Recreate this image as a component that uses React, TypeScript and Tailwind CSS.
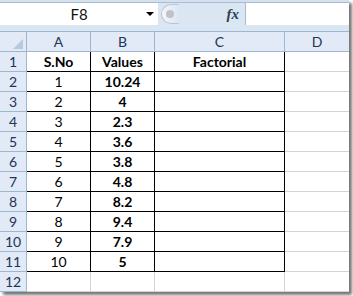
import React from 'react'

const cols = ['A', 'B', 'C', 'D']
const colWidths = ['w-[64px]', 'w-[64px]', 'w-[130px]', 'w-[64px]']

const data: [string, string, string][] = [
  ['S.No', 'Values', 'Factorial'],
  ['1', '10.24', ''],
  ['2', '4', ''],
  ['3', '2.3', ''],
  ['4', '3.6', ''],
  ['5', '3.8', ''],
  ['6', '4.8', ''],
  ['7', '8.2', ''],
  ['8', '9.4', ''],
  ['9', '7.9', ''],
  ['10', '5', ''],
]

function FormulaBar() {
  return (
    <div className="flex h-[22px]">
      <div className="relative flex w-[158px] items-center justify-center bg-white text-[15px] text-[#111]">
        F8
        <span className="absolute right-[4px] top-[9px] h-0 w-0 border-x-[4px] border-t-[4px] border-x-transparent border-t-black" />
      </div>
      <div className="flex w-[87px] items-center bg-[#dbe6f3]">
        <div className="ml-[3px] flex h-[20px] w-[18px] items-center rounded-l-full border border-r-0 border-[#b9c6d6] bg-gradient-to-r from-[#f4f6f9] to-[#dbe6f3] pl-[4px]">
          <span className="h-[8px] w-[8px] rounded-full bg-[#bfc3c9]" />
        </div>
        <span className="ml-auto mr-[6px] font-['Liberation_Serif',serif] text-[15px] font-bold italic text-[#2f3e56]">
          fx
        </span>
      </div>
      <div className="flex-1 border-l border-[#a9bcd5] bg-white" />
    </div>
  )
}

export default function App() {
  return (
    <div className="min-h-screen bg-white font-['Lato',sans-serif]">
      <div className="flex w-[349px] flex-col bg-[#dbe6f3] shadow-[3px_3px_3px_rgba(0,0,0,0.55)]">
        <div className="h-[3px] border-b border-[#a9bcd5] bg-[#d5e0ee]" />
        <FormulaBar />
        <div className="h-[6px] bg-[#dbe6f3]" />

        {/* column headers */}
        <div className="flex h-[21px] border-y border-[#9eb6ce] bg-[#e1eaf6] text-[14px] text-[#1e3555]">
          <div className="relative w-[27px] border-r border-[#9eb6ce]">
            <span className="absolute bottom-[2px] right-[3px] h-0 w-0 border-b-[10px] border-l-[10px] border-b-[#b8c9de] border-l-transparent" />
          </div>
          {cols.map((c, i) => (
            <div
              key={c}
              className={`${colWidths[i]} flex items-center justify-center ${i < 3 ? 'border-r border-[#9eb6ce]' : ''}`}
            >
              {c}
            </div>
          ))}
        </div>

        {/* rows */}
        {Array.from({ length: 12 }).map((_, r) => {
          const row = data[r]
          const boxed = r < 11
          return (
            <div key={r} className="flex h-[20px] text-[14px]">
              <div className="flex w-[27px] items-center justify-center border-b border-r border-[#9eb6ce] bg-[#e1eaf6] text-[#1e3555]">
                {r + 1}
              </div>
              <div
                className={`flex w-[64px] items-center justify-center border-b border-r bg-white text-black ${
                  boxed ? 'border-black' : 'border-r-[#d4d4d4] border-b-[#d4d4d4]'
                } ${r === 0 ? 'font-bold' : ''}`}
              >
                {row ? row[0] : ''}
              </div>
              <div
                className={`flex w-[64px] items-center justify-center border-b border-r bg-white font-bold text-black ${
                  boxed ? 'border-black' : 'border-r-[#d4d4d4] border-b-[#d4d4d4]'
                }`}
              >
                {row ? row[1] : ''}
              </div>
              <div
                className={`flex w-[130px] items-center justify-center border-b border-r bg-white font-bold text-black ${
                  boxed ? 'border-black' : 'border-r-[#d4d4d4] border-b-[#d4d4d4]'
                }`}
              >
                {row ? row[2] : ''}
              </div>
              <div className="w-[64px] border-b border-[#d4d4d4] bg-white" />
            </div>
          )
        })}
      </div>
    </div>
  )
}
